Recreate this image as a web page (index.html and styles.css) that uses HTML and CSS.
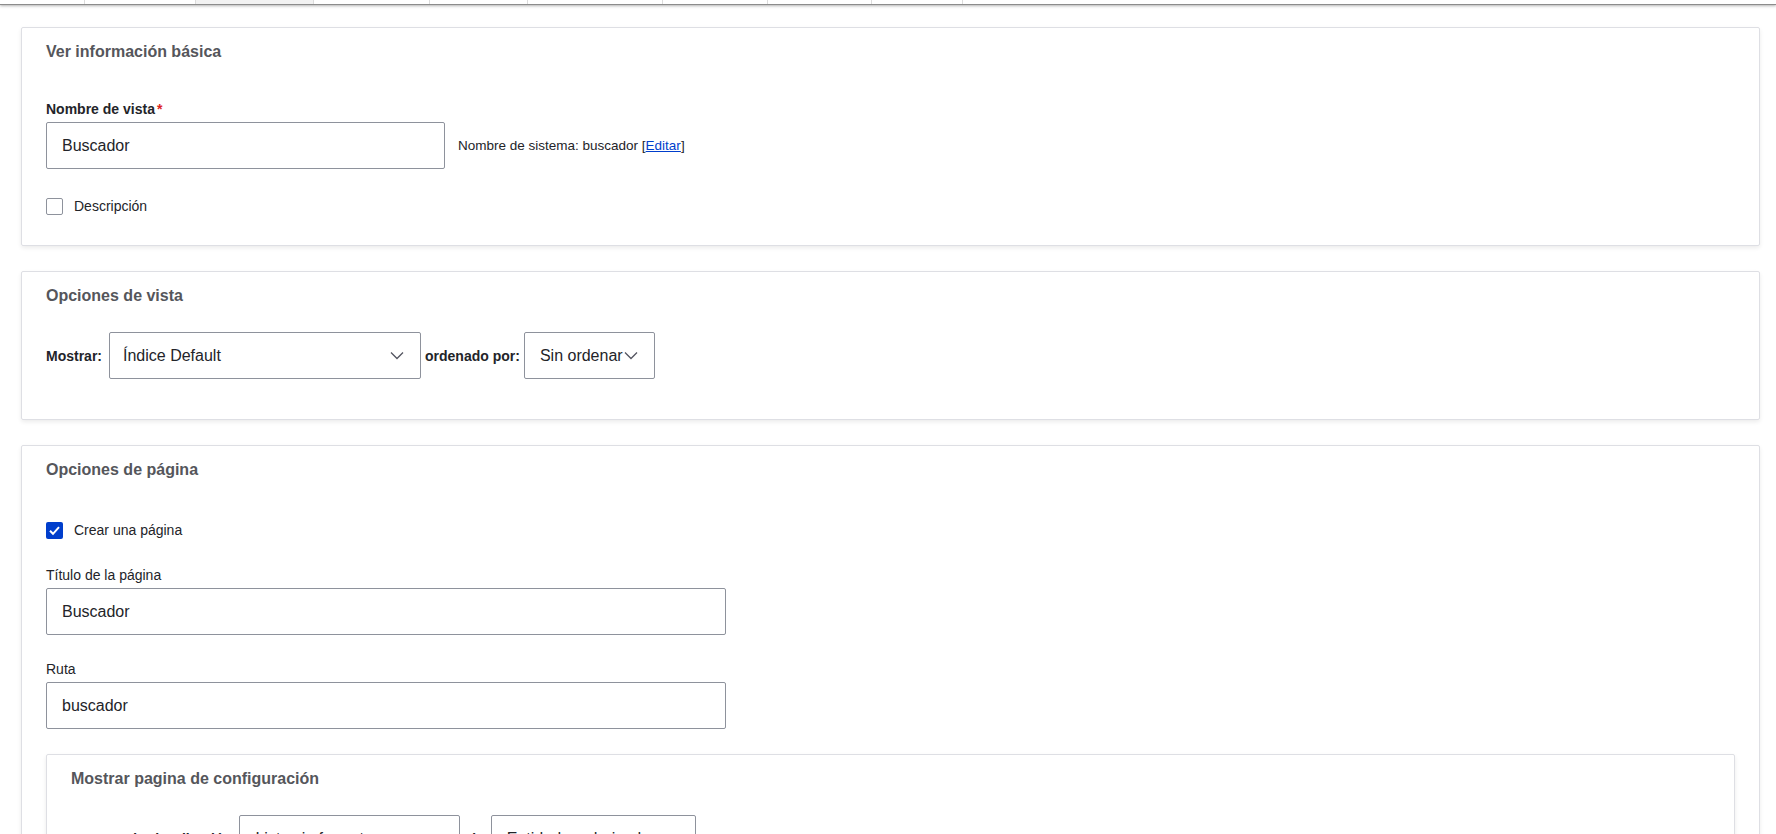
FILE: index.html
```html
<!DOCTYPE html>
<html lang="es">
<head>
    <meta charset="UTF-8">
    <meta name="viewport" content="width=device-width, initial-scale=1.0">
    <title>Agregar vista</title>
    <link rel="stylesheet" href="styles.css">
</head>
<body>
    <div class="tabs">
        <span class="tab"></span>
        <span class="tab"></span>
        <span class="tab active"></span>
        <span class="tab"></span>
        <span class="tab"></span>
        <span class="tab"></span>
        <span class="tab"></span>
        <span class="tab"></span>
        <span class="tab"></span>
        <span class="tab last"></span>
    </div>

    <div class="page">
        <section class="card">
            <h2 class="card-title">Ver información básica</h2>
            <label class="label strong" for="label">Nombre de vista<span class="required">*</span></label>
            <div class="field-row">
                <input class="text-input short" type="text" id="label" value="Buscador">
                <span class="machine-name">Nombre de sistema: buscador [<a href="#" class="link">Editar</a>]</span>
            </div>
            <div class="check-row">
                <span class="checkbox"></span>
                <span>Descripción</span>
            </div>
        </section>

        <section class="card card-options">
            <h2 class="card-title">Opciones de vista</h2>
            <div class="select-row">
                <span class="strong row-label">Mostrar:</span>
                <div class="select wide">
                    <span>Índice Default</span>
                    <svg class="chevron" width="14" height="9" viewBox="0 0 14 9"><path d="M1 1.5l6 6 6-6" fill="none" stroke="#545560" stroke-width="1.3"/></svg>
                </div>
                <span class="strong">ordenado por:</span>
                <div class="select">
                    <span>Sin ordenar</span>
                    <svg class="chevron" width="14" height="9" viewBox="0 0 14 9"><path d="M1 1.5l6 6 6-6" fill="none" stroke="#545560" stroke-width="1.3"/></svg>
                </div>
            </div>
        </section>

        <section class="card card-page">
            <h2 class="card-title">Opciones de página</h2>
            <div class="check-row page-check">
                <span class="checkbox checked">
                    <svg width="17" height="17" viewBox="0 0 17 17"><path d="M4 8.8l3 3 6-6.6" fill="none" stroke="#fff" stroke-width="2"/></svg>
                </span>
                <span>Crear una página</span>
            </div>
            <label class="label" for="page-title">Título de la página</label>
            <input class="text-input long" type="text" id="page-title" value="Buscador">
            <label class="label path-label" for="page-path">Ruta</label>
            <input class="text-input long" type="text" id="page-path" value="buscador">

            <div class="card inner-card">
                <h2 class="card-title">Mostrar pagina de configuración</h2>
                <div class="select-row">
                    <span class="strong format-label">Formato de visualización:</span>
                    <div class="select style-select">
                        <span>Lista sin formato</span>
                        <svg class="chevron" width="14" height="9" viewBox="0 0 14 9"><path d="M1 1.5l6 6 6-6" fill="none" stroke="#545560" stroke-width="1.3"/></svg>
                    </div>
                    <span class="strong joiner">de</span>
                    <div class="select row-select">
                        <span>Entidad renderizada</span>
                        <svg class="chevron" width="14" height="9" viewBox="0 0 14 9"><path d="M1 1.5l6 6 6-6" fill="none" stroke="#545560" stroke-width="1.3"/></svg>
                    </div>
                </div>
            </div>
        </section>
    </div>
</body>
</html>
```

FILE: styles.css
```css
* {
    box-sizing: border-box;
}

body {
    margin: 0;
    font-family: 'Liberation Sans', Arial, sans-serif;
    font-size: 14px;
    color: #232429;
    background: #fff;
}

.tabs {
    display: grid;
    grid-template-columns: 85px 111px 118px 116px 98px 135px 105px 104px 91px 1fr;
    height: 5px;
    border-bottom: 1px solid #8c8c8c;
    box-shadow: 0 1px 3px rgba(0, 0, 0, 0.3);
}

.tab {
    border-right: 1px solid #dcdcdc;
}

.tab.active {
    background: #f2f2f2;
}

.tab.last {
    border-right: none;
}

.page {
    padding: 22px 16px 0 21px;
}

.card {
    border: 1px solid #dedfe4;
    border-radius: 2px;
    box-shadow: 0 2px 4px rgba(0, 0, 0, 0.08);
    padding: 14px 24px 30px;
    margin-bottom: 25px;
}

.card-options {
    padding-bottom: 40px;
}

.card-title {
    margin: 0 0 38px;
    font-size: 16px;
    line-height: 20px;
    font-weight: bold;
    color: #55565b;
}

.card-options .card-title {
    margin-bottom: 26px;
}

.card-page .card-title {
    margin-bottom: 41px;
}

.label {
    display: block;
    line-height: 18px;
    margin-bottom: 4px;
}

.strong {
    font-weight: bold;
}

.required {
    color: #dc2323;
    margin-left: 2px;
}

.field-row {
    display: flex;
    align-items: center;
    gap: 13px;
}

.text-input {
    height: 47px;
    padding: 0 15px;
    border: 1px solid #8e929c;
    border-radius: 2px;
    font-family: inherit;
    font-size: 16px;
    color: #232429;
    background: #fff;
    outline: none;
}

.text-input.short {
    width: 399px;
}

.text-input.long {
    display: block;
    width: 680px;
}

.machine-name {
    font-size: 13.5px;
}

.link {
    color: #003ecc;
}

.check-row {
    display: flex;
    align-items: center;
    gap: 11px;
    height: 18px;
    margin-top: 28px;
    line-height: 18px;
}

.page-check {
    margin-top: 0;
    margin-bottom: 27px;
}

.checkbox {
    width: 17px;
    height: 17px;
    border: 1px solid #8e929c;
    border-radius: 2px;
    background: #fff;
}

.checkbox.checked {
    border: none;
    background: #003ecc;
}

.checkbox svg {
    display: block;
}

.path-label {
    margin-top: 25px;
}

.select-row {
    display: flex;
    align-items: center;
    gap: 4px;
}

.row-label {
    padding-right: 3px;
}

.format-label {
    letter-spacing: -0.3px;
}

.joiner {
    margin: 0 3px;
}

.select {
    display: flex;
    align-items: center;
    justify-content: space-between;
    height: 47px;
    padding: 0 16px 0 15px;
    border: 1px solid #8e929c;
    border-radius: 2px;
    font-size: 16px;
    background: #fff;
}

.select.wide {
    width: 312px;
    padding-left: 13px;
}

.select.style-select {
    width: 221px;
}

.select.row-select {
    width: 205px;
}

.chevron {
    flex-shrink: 0;
    margin-left: 1px;
}

.inner-card {
    margin-top: 25px;
    margin-bottom: 0;
    padding-bottom: 24px;
}

.inner-card .card-title {
    margin-bottom: 26px;
}
```
